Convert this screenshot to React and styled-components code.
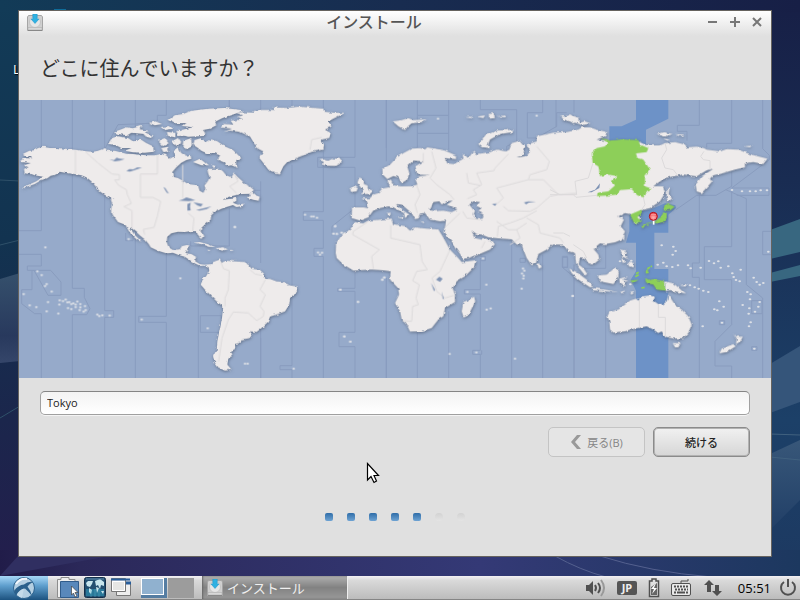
import { useState } from "react";
import styled, { createGlobalStyle, css } from "styled-components";

const GlobalStyle = createGlobalStyle`
  * {
    box-sizing: border-box;
  }

  body {
    margin: 0;
    background: #182c50;
    font-family: "Open Sans", "Noto Sans CJK JP", sans-serif;
  }

  button,
  input {
    font-family: inherit;
    margin: 0;
  }
`;

const Desktop = styled.div`
  position: relative;
  display: flex;
  flex-direction: column;
  min-height: 100vh;
  overflow: hidden;
`;

const WallpaperSvg = styled.svg`
  position: absolute;
  inset: 0;
  width: 100%;
  height: 100%;
`;

const Shortcut = styled.div`
  position: absolute;
  left: 13px;
  top: 9px;
  color: #fff;
  font-size: 13px;
  line-height: 18px;
  text-shadow: 1px 1px 1px #000;

  &::before {
    content: "";
    display: block;
    width: 12px;
    height: 2px;
    margin: 0 0 49px 41px;
    background: #0f6c99;
  }
`;

const Window = styled.main`
  position: relative;
  margin: 10px 28px 19px 18px;
  border: 1px solid #66635f;
  background: #e0e0e0;
`;

const TitleBar = styled.header`
  display: grid;
  grid-template-columns: 24px 1fr 66px;
  align-items: start;
  height: 25px;
  padding: 0 7px;
  background: linear-gradient(#fff, #e0e0e0);

  > svg {
    margin-top: 3px;
  }
`;

const Title = styled.span`
  color: #555;
  font-size: 16px;
  font-weight: 500;
  line-height: 22px;
  text-align: center;
`;

const WindowControls = styled.div`
  display: flex;
  justify-content: flex-end;
  gap: 8px;
  padding-top: 5px;
`;

const ControlButton = styled.button`
  display: flex;
  padding: 0;
  border: 0;
  background: none;
  color: #777;
`;

const Question = styled.h1`
  margin: 0;
  padding: 19px 21px 17px;
  color: #333;
  font-size: 20px;
  font-weight: 400;
  line-height: 28px;
`;

const MapSvg = styled.svg`
  display: block;
  width: 100%;
  height: auto;
  background: #96aaca;
`;

const Controls = styled.form`
  display: flex;
  flex-direction: column;
  gap: 12px;
  padding: 13px 21px 35px;
`;

const CityInput = styled.input`
  width: 100%;
  height: 24px;
  padding: 0 6px 2px;
  border: 1px solid #a0a0a0;
  border-top-color: #858585;
  border-radius: 5px;
  outline: none;
  background: linear-gradient(#f3f3f3, #fff);
  box-shadow: 0 1px 0 #f4f4f4;
  color: #222;
  font-size: 11px;
`;

const ButtonRow = styled.div`
  display: flex;
  justify-content: flex-end;
  gap: 8px;
`;

const Button = styled.button`
  display: flex;
  align-items: center;
  justify-content: center;
  gap: 5px;
  width: 97px;
  height: 30px;
  padding: 0 0 1px;
  border: 1px solid #c4c4c4;
  border-radius: 5px;
  background: #e5e5e5;
  color: #858585;
  font-size: 11px;

  ${({ $primary }) =>
    $primary &&
    css`
      border-color: #8b8b8b;
      background: linear-gradient(#f1f1f1, #d6d6d6);
      box-shadow: inset 0 0 0 1px #b2b2b2;
      color: #222;
      font-weight: 500;
    `}
`;

const Steps = styled.div`
  display: flex;
  justify-content: center;
  gap: 14px;
  margin-top: 44px;
`;

const Step = styled.span`
  width: 8px;
  height: 8px;
  border-radius: ${({ $done }) => ($done ? "2px" : "4px")};
  background: ${({ $done }) =>
    $done
      ? "linear-gradient(#2f6da8, #6ea3d3)"
      : "linear-gradient(#d2d2d2, #e4e4e4)"};
`;

const PointerSvg = styled.svg`
  position: absolute;
  left: 366px;
  top: 462px;
`;

const Taskbar = styled.footer`
  position: relative;
  display: flex;
  align-items: center;
  height: 24px;
  margin-top: auto;
  border-bottom: 1px solid #858585;
  background: linear-gradient(#f3f1f4, #d9d9d9 20%, #bcbcbc);
`;

const StartButton = styled.button`
  display: flex;
  justify-content: center;
  width: 48px;
  height: 24px;
  padding: 0;
  border: 0;
  background: linear-gradient(#a7d8f8, #5f9fce 40%, #1c527f);
`;

const Launchers = styled.div`
  display: flex;
  gap: 4px;
  padding: 0 9px 0 8px;
`;

const BarButton = styled.button`
  display: flex;
  padding: 0;
  border: 0;
  background: none;
  color: #505050;
`;

const Pager = styled.div`
  display: flex;
  gap: 1px;
  margin-right: 8px;
`;

const Workspace = styled.button`
  width: 26px;
  height: 20px;
  padding: 0;
  border: 0;
  background: ${({ $active }) => ($active ? "#557da2" : "#9c9c9c")};

  ${({ $active }) =>
    $active &&
    css`
      &::before {
        content: "";
        display: block;
        width: 21px;
        height: 15px;
        margin-bottom: 4px;
        border: 1px solid #fff;
        background: #90b1cf;
      }
    `}
`;

const TaskButton = styled.button`
  display: flex;
  align-items: center;
  gap: 3px;
  width: 146px;
  height: 23px;
  padding: 0 4px;
  border: 0;
  border-right: 1px solid #eee;
  background: linear-gradient(#b0b0b0, #828282 50%, #999);
  box-shadow: inset 1px 0 2px #666;
  color: #f0f0f0;
  font-size: 13px;
`;

const Tray = styled.div`
  display: flex;
  align-items: center;
  margin-left: auto;
  padding-right: 3px;
  gap: 8px;
`;

const TrayIcons = styled.div`
  display: flex;
  gap: 11px;
  margin-right: 8px;
`;

const Clock = styled.time`
  color: #000;
  font-size: 13px;
  line-height: 20px;
`;

// Coastlines are kept as regional tiles, three units to a map pixel
const regions = [
  {
    x: -3,
    land: [
      "M8 187 20 181 42 181 38 176 22 173 15 167 34 158 48 157 60 150 75 146 95 150 120 150 150 153 180 156 205 160 225 161 240 158 262 150 268 158 290 158 305 162 325 167 345 168 365 170 385 172 410 172 430 168 445 172 455 182 470 174 465 158 480 148 490 165 505 173 517 170 520 182 505 186 490 194 475 208 463 222 465 236 480 240 495 248 510 258 540 262 545 278 556 284 562 272 560 262 570 248 575 238 570 224 568 212 585 212 605 212 615 220 625 232 640 238 648 226 660 238 672 248 680 258 695 265 707 275 700 287 670 288 645 293 630 297 613 305 640 302 655 299 655 308 645 314 660 320 680 316 672 324 655 327 645 321 625 327 610 332 590 342 580 352 578 365 560 380 550 390 548 400 556 415 550 423 542 416 535 400 520 399 500 402 480 401 460 406 448 416 446 432 452 448 465 456 485 454 492 444 510 440 508 455 502 466 520 468 534 476 532 490 545 498 560 501 580 498 575 508 558 502 548 504 530 496 515 486 500 476 480 470 465 464 445 466 420 458 398 448 392 438 380 424 365 412 355 402 340 390 338 394 350 410 362 422 370 431 358 426 345 414 332 398 322 380 300 372 285 352 279 340 282 315 278 303 288 303 262 292 245 280 232 264 220 250 205 238 190 232 170 228 145 225 125 221 112 230 98 233 88 241 70 246 50 258 25 266 4 270 28 262 55 250 75 236 50 232 40 228 20 226 18 212 32 208 18 202 38 195 10 192Z",
      "M452 65 470 52 495 48 520 38 570 32 620 30 675 37 650 48 630 54 612 61 590 72 595 82 575 92 555 96 562 106 555 114 510 116 478 106 490 96 525 88 494 84 505 75 470 76Z",
      "M270 137 282 120 300 115 330 120 345 130 370 125 385 135 405 145 408 161 380 164 345 163 320 158 340 150 310 150 294 142Z",
      "M287 102 310 94 325 88 345 91 370 83 365 94 392 98 380 108 340 104 328 112 300 108Z",
      "M525 140 530 126 548 121 566 132 580 124 598 130 620 145 645 156 670 180 655 186 654 200 660 210 640 202 625 205 618 193 598 185 606 172 588 166 565 165 550 158 540 150Z",
      "M420 128 440 120 452 136 435 145ZM462 130 480 120 490 135 476 144ZM496 128 520 120 522 145 506 154 493 146ZM395 75 412 70 432 78 410 82ZM428 87 455 84 466 92 440 96ZM447 102 472 104 472 118 450 114ZM475 98 550 100 555 110 480 114ZM377 102 402 112 400 120 378 115ZM430 150 450 146 454 160 436 162Z",
      "M525 192 545 182 556 190 570 202 550 202ZM580 200 594 204 588 210ZM690 300 702 283 710 290 725 296 722 308 706 305Z",
      "M526 434 545 432 568 438 592 447 575 446 550 438ZM596 450 615 448 630 454 612 458ZM568 455 578 456 572 459ZM636 455 647 456 640 459Z",
    ],
    borders: [
      "M172 157V228M203 162 240 195 282 228 304 230 304 245 290 246 302 262 325 275 328 290 340 316 318 326 342 338V390M418 172V228H367V298H404L428 310 418 355 408 388 376 394 380 410M494 200V300M510 345 528 360 524 400M650 230 660 250 635 265 655 285",
    ],
    lakes: [
      "M274 184 288 186 296 179 304 182 320 183 306 188 290 190ZM325 219 334 213 346 214 358 208 372 209 350 216 336 221ZM436 267 442 270 448 280 453 287 446 284ZM482 308 494 304 505 298 518 302 532 307 512 309ZM508 318 518 314 516 326 518 337 508 338ZM526 313 540 315 555 318 548 326 538 322ZM534 336 552 332 580 325 566 333 545 338Z",
    ],
    zones: [
      "M3 398H70V6M3 469H70V504H28V517H98L129 552V592H90L48 517M42 517V575H11V617L50 647H70V840M163 6V571H199V598L216 632 206 650H163V840M260 6V638H287V658H260V840M352 6V840M445 52V6M445 52H418V75L300 80 262 150M445 430V655H362V673H445V840M541 500V840M547 653H610V703H547ZM634 340V444H518V430M634 6V30M728 6V40M728 720V840M710 277H728M323 405V428H345V405",
    ],
    dots: [
      [82, 448], [58, 520], [71, 531], [86, 558], [81, 564], [101, 581], [17, 588], [35, 622], [55, 627], [86, 640], [121, 647], [90, 612], [125, 607], [135, 609], [143, 605], [148, 613], [154, 612], [160, 618], [166, 616], [173, 620], [178, 611], [173, 627], [187, 618], [187, 628], [185, 636], [201, 624], [203, 636], [197, 641], [150, 630], [160, 633], [124, 620], [238, 650], [244, 654], [253, 652], [275, 653], [371, 665], [487, 541], [651, 387], [569, 691], [332, 423],
    ],
  },
  {
    x: 543,
    land: [
      "M0 500 22 500 30 502 40 492 60 484 64 495 78 488 105 490 130 492 145 500 155 512 180 516 193 528 195 542 210 543 230 550 250 552 270 562 290 565 292 575 285 588 270 600 268 620 255 640 235 648 210 656 204 672 185 690 170 702 150 700 158 712 152 720 125 725 122 735 105 738 106 752 90 762 98 772 85 782 82 800 95 815 75 818 55 808 45 795 39 775 50 755 52 730 60 690 66 660 70 625 50 610 30 590 15 575 2 560 8 545 18 535 28 518 25 505Z",
      "M58 88 70 78 100 80 92 68 130 64 110 56 130 52 102 42 160 44 185 36 225 36 220 28 260 30 300 26 370 32 372 41 400 44 435 45 400 62 385 70 395 85 375 95 392 105 388 120 365 125 372 140 370 154 335 162 315 170 290 180 262 192 250 205 240 226 225 224 205 215 190 195 178 180 190 160 170 150 160 132 150 115 120 102 90 98 70 102 96 92Z",
      "M358 186 372 184 385 188 400 181 418 182 426 192 405 204 380 203 365 199 372 192Z",
    ],
    borders: [
      "M62 490 70 512 88 518 85 575 75 600 75 625M85 665 100 642 145 645 170 668 190 655 192 640 180 625 196 590 180 575 196 545M85 665 66 720 56 790M150 515 165 528 185 532M330 155 335 125 365 118",
    ],
    lakes: [],
    zones: [
      "M182 250V495M182 690V840M276 6V25M276 200V803H240V815H276V840M370 6V30M370 160V341H310V367H370V451H342V475H370V840M465 6V178H353V208H465V330L396 385V412M465 520V571H413V580H465V703H417V746H465V840M559 6V190M559 540V840M88 6V40M88 330V445",
    ],
    dots: [
      [315, 350], [334, 355], [341, 355], [351, 359], [354, 463], [360, 470], [366, 464], [405, 385], [400, 407], [410, 408], [424, 404], [421, 575], [474, 612], [433, 715], [451, 731], [135, 797], [143, 797], [281, 812], [547, 544], [553, 538], [104, 387],
    ],
  },
  {
    x: 933,
    land: [
      "M65 360 66 328 100 328 115 330 112 312 95 302 120 300 130 290 145 285 156 272 180 267 172 250 182 244 192 262 215 265 245 264 262 260 255 240 272 234 300 231 262 230 256 205 280 190 250 188 232 205 238 225 232 245 215 255 205 238 190 234 172 243 158 230 157 213 180 200 200 178 220 165 245 152 270 150 285 154 292 148 315 152 345 158 378 172 378 183 345 180 352 196 372 198 400 182 398 165 415 180 430 160 440 168 480 162 500 155 528 160 538 155 545 135 570 128 585 145 580 170 560 178 590 174 600 160 590 140 620 130 665 124 670 115 700 105 760 98 760 455 735 465 715 460 700 440 668 438 650 455 625 468 618 495 605 502 590 480 580 455 575 440 560 440 545 424 505 421 475 418 455 410 440 408 425 398 435 420 455 425 470 422 495 438 480 455 440 472 400 484 385 460 365 430 340 402 345 388 348 368 330 370 300 365 290 352 285 345 270 347 265 362 255 363 245 345 215 320 198 318 215 335 238 350 225 360 222 345 190 328 175 325 150 330 130 338 115 358 90 368Z M298 336 310 312 328 310 335 320 350 310 368 308 350 320 382 334 365 342 340 338 315 339Z M418 320 430 310 450 312 440 322 455 330 442 340 460 350 458 362 440 364 428 350 432 338Z",
      "M75 372 100 376 115 368 185 362 190 378 225 384 240 398 255 388 290 392 325 394 338 415 360 455 385 480 395 492 440 486 435 505 405 535 380 550 368 570 375 590 375 612 345 630 340 655 325 665 305 690 275 700 240 701 230 680 215 665 210 640 195 615 207 590 205 572 180 545 182 520 160 517 125 515 70 518 40 500 20 480 17 465 18 435 40 405 60 395Z",
      "M395 640 400 612 418 605 432 596 436 610 416 650 400 656Z",
      "M90 266 82 254 88 238 102 245 102 258 112 262 116 274 130 278 120 288 92 288 102 280ZM60 274 75 262 84 268 80 280 64 282Z",
      "M188 70 215 66 235 60 250 66 290 64 275 72 245 76 235 84 225 96 205 85ZM445 138 465 112 500 98 550 95 548 102 510 108 480 125 474 140 480 150 455 147Z",
      "M405 58 425 56 430 61ZM440 56 465 52 460 60ZM475 48 490 46 495 60 480 62ZM500 55 530 52 525 58ZM622 498 630 495 635 508 626 512ZM172 345 182 344 180 354 174 354ZM200 357 220 355 218 362ZM268 370 285 372 278 375Z",
      "M695 60 720 50 748 60 750 78 710 68Z",
    ],
    borders: [
      "M112 372 70 400 68 410 148 455 125 475 130 512M182 382V420L270 440 276 490 292 515 260 520 248 548 268 560 258 600 265 620 248 625 245 670 218 668M360 455 330 520 306 540 320 580 345 600 372 592M260 262 270 290 255 320 262 345M280 165 280 195M305 160 318 210 300 240 320 260 360 290 372 305M535 168 495 210 492 218 440 225 455 260 430 275 440 290 412 302M410 225 415 255 450 262M620 145 658 190 650 215 600 230 595 245 640 245 685 290 740 285M595 245 500 270 520 300 498 320M685 290 660 295 620 330 600 340 535 338 520 325M398 340 410 360 450 365M390 345 345 388M620 338 580 360 540 375 505 385 502 415M590 360 625 380 630 405 690 420 700 435M540 440 570 420 560 395 590 375M455 450 465 430M500 370 535 395 560 395",
    ],
    lakes: [
      "M318 545 328 536 338 542 330 552ZM303 555 315 575 312 580ZM335 580 342 604 338 602ZM582 313 594 310 618 311 596 314 588 319ZM486 318 500 316 495 324Z",
    ],
    zones: [
      "M262 6V150M262 52H356V6M262 106H356V155M356 52V106M451 6V35H560V130L530 145V160M638 6V44H592V120H620L680 85V44H710M732 6V44M262 700V840M356 640V840M451 475H466V488H451M451 480V575H403V588H451V757H428V769H455V757M451 769V840M545 430V840M638 470V840M732 500V840M570 481H586V493H570ZM697 475H712V508H697ZM697 508 760 560M169 6V150M169 540V840",
    ],
    dots: [
      [16, 384], [11, 407], [21, 408], [36, 404], [31, 575], [84, 612], [43, 715], [61, 731], [157, 546], [163, 538], [359, 768], [439, 763], [555, 782], [412, 582], [469, 560], [470, 635], [482, 631], [575, 572], [579, 511], [583, 518], [576, 526], [581, 533], [580, 541], [459, 481], [728, 594], [620, 53], [324, 62],
    ],
  },
  {
    x: 1593,
    land: [
      "M-40 115 10 104 50 102 85 95 95 88 120 88 140 95 172 102 165 115 140 125 180 130 215 127 260 128 290 142 330 142 345 135 375 132 400 138 410 148 440 146 462 150 470 155 510 160 530 153 565 155 600 168 625 175 652 182 640 198 610 192 585 196 585 208 555 215 520 225 490 232 480 242 485 252 455 285 440 280 437 260 455 235 475 222 490 212 470 217 440 235 400 230 370 235 345 240 310 264 340 265 345 285 330 310 300 330 280 335 258 345 270 358 268 375 252 375 248 355 240 348 225 345 205 355 222 365 212 385 225 400 215 425 195 433 165 438 150 436 140 444 145 455 130 452 145 470 148 485 130 500 115 495 105 480 90 478 86 500 100 510 112 528 105 532 88 512 78 495 75 465 60 450 40 440 8 440 -40 420Z",
      "M172 655 178 642 205 635 225 620 240 608 258 602 265 608 278 595 300 592 315 597 310 608 325 618 340 618 350 610 355 590 365 605 375 620 395 635 415 655 425 680 415 705 400 720 370 722 345 716 335 700 325 705 310 695 290 685 255 692 225 700 190 704 180 695 178 670Z",
      "M368 735 392 735 385 748 375 748ZM345 550 370 556 385 568 405 587 385 582 360 576 345 580ZM390 562 415 556 405 566Z",
      "M550 705 560 716 578 716 572 730 558 738 560 722ZM550 738 557 745 530 762 508 766 515 752Z",
      "M58 512 80 522 110 545 130 565 120 568 85 545 65 525ZM125 570 160 574 205 582 170 580 130 577ZM145 532 170 530 196 508 206 520 205 540 190 558 160 552 145 545ZM208 542 235 535 218 545 235 548 220 553 228 565 210 560ZM212 455 228 457 224 472 236 484 216 476ZM232 495 250 494 252 508 238 506ZM214 480 228 490 218 495ZM215 420 224 412 222 428ZM210 582 225 578 220 586ZM240 585 256 580 245 590Z",
      "M352 268 358 270 356 288 366 302 354 312 350 298ZM320 108 340 102 368 108 345 116ZM375 108 404 110 392 114ZM340 122 360 125 350 128ZM582 145 604 143 600 148ZM35 60 60 50 80 62 60 70ZM85 75 105 70 122 76 95 82ZM30 52 60 58 85 66 70 76 50 68Z",
    ],
    green: [
      "M155 120 180 128 215 124 265 126 270 140 295 150 290 162 258 166 262 180 280 185 300 215 285 235 285 265 305 272 285 282 280 298 262 292 245 273 210 276 200 290 180 292 140 294 145 284 175 280 195 262 185 250 202 234 175 230 150 234 145 205 128 195 125 165 140 150 165 145 172 134Z",
      "M240 350 275 335 275 344 262 358 272 368 268 376 252 374Z",
      "M345 318 360 320 374 326 362 336 350 337 340 333ZM342 340 350 345 350 360 342 370 325 376 308 374 288 378 278 392 274 384 285 376 310 372 332 358ZM292 380 300 379 296 385Z",
      "M285 540 300 546 310 543 345 550 345 578 320 575 310 560 290 555ZM285 518 296 512 290 528ZM240 548 266 545 250 555Z",
    ],
    borders: [
      "M345 135 350 155 335 180 345 210 370 215 385 235M462 160 452 175 460 185 480 188 480 215M128 198 115 240 75 250 80 290 30 290 0 275M0 290 70 290 78 298 140 292M280 298 285 320 275 335M60 415 40 405 10 405M268 606V688M325 618V658H346V718M70 440 100 460 110 480",
    ],
    lakes: ["M113 283 135 275 150 256 148 270 125 283Z"],
    zones: [
      "M18 6V88M72 500V840M167 438V511H90M167 590V840M448 6V82H382V100H411V128M448 290V495H427V538H448V840M545 6V136H470V148M545 220V265L498 292H440L378 335M545 275V446H463V545H545V680L495 730V804H545V840M638 6V152L658 172V185L545 270H657V292H560M527 275 589 302V560L638 600V840M605 608H636V647H605ZM663 400H638V470H663M508 668H524V680H508ZM605 746H621V757H605ZM38 478H53V508H38Z",
    ],
    dots: [
      [335, 442], [370, 446], [377, 459], [368, 470], [323, 500], [340, 494], [350, 505], [367, 507], [384, 502], [414, 502], [422, 511], [452, 509], [477, 489], [492, 496], [505, 490], [512, 509], [535, 505], [547, 526], [551, 537], [558, 546], [569, 550], [572, 515], [611, 539], [620, 552], [629, 560], [640, 555], [655, 461], [592, 582], [602, 589], [600, 604], [578, 621], [598, 631], [596, 647], [629, 612], [625, 626], [615, 641], [602, 673], [597, 685], [493, 634], [502, 637], [508, 610], [521, 626], [420, 562], [434, 568], [446, 572], [460, 578], [475, 582], [546, 276], [576, 280], [600, 280], [617, 280], [632, 277], [651, 277], [516, 674], [613, 752], [458, 685], [68, 594], [210, 490], [244, 488], [241, 559],
    ],
  },
];

const WorldMap = () => (
  <MapSvg viewBox="0 0 2256 834" role="img" aria-label="Asia/Tokyo">
    <defs>
      <filter id="coast" filterUnits="userSpaceOnUse" x="0" y="0" width="2256" height="834" colorInterpolationFilters="sRGB">
        <feTurbulence type="fractalNoise" baseFrequency="0.07" numOctaves="2" seed="4" result="noise" />
        <feDisplacementMap in="SourceGraphic" in2="noise" scale="9" xChannelSelector="R" yChannelSelector="G" result="rough" />
        <feDropShadow in="rough" dx="1" dy="3" stdDeviation="4" floodColor="#394558" floodOpacity="0.6" />
      </filter>
      <radialGradient id="pin" cy="0.7">
        <stop offset="0" stopColor="#ffb0b0" />
        <stop offset="1" stopColor="#f0595d" />
      </radialGradient>
    </defs>
    <g transform="translate(1593 -6)" fill="#6d92c7">
      <path d="M258 0H355V62L288 95V160L178 130V85H215L258 65Z" />
      <path d="M345 316 376 322 378 330 355 350V404H313V513H355V840H258V578L242 545 258 520V434H228L238 400V345L300 335Z" />
    </g>
    {regions.map(({ x, zones }) => (
      <g key={x} transform={`translate(${x} -6)`} fill="none" stroke="#899cbe" strokeWidth="3">
        {zones.map((d) => <path key={d} d={d} />)}
      </g>
    ))}
    <g filter="url(#coast)">
      {regions.map(({ x, land, green = [] }) => (
        <g key={x} transform={`translate(${x} -6)`} fill="#eeebeb" fillRule="evenodd">
          {land.map((d) => <path key={d} d={d} />)}
          {green.map((d) => <path key={d} d={d} fill="#8dcf59" />)}
        </g>
      ))}
    </g>
    {regions.map(({ x, borders, lakes, dots }) => (
      <g key={x} transform={`translate(${x} -6)`}>
        {borders.map((d) => <path key={d} d={d} fill="none" stroke="#dcdadb" strokeWidth="3" />)}
        {lakes.map((d) => <path key={d} d={d} fill="#7f93b4" />)}
        {dots.map(([cx, cy]) => <ellipse key={`${cx}-${cy}`} cx={cx} cy={cy} rx="4" ry="3" fill="#dde0e6" />)}
      </g>
    ))}
    <g transform="translate(1593 -6)">
      <path d="M292 512 300 508M288 523H296M258 527 266 523M256 536 266 530M274 570 284 568M302 506 306 504" stroke="#8dcf59" strokeWidth="5" />
      <path d="M311 364V380" stroke="#fff" strokeWidth="5" />
      <circle cx="310" cy="355" r="12" fill="url(#pin)" stroke="#b30e18" strokeWidth="3" />
      <path d="M303 350H318M304 357H317" stroke="#ffb3b3" strokeWidth="2" />
    </g>
  </MapSvg>
);

const Wallpaper = () => (
  <WallpaperSvg viewBox="0 0 800 600" preserveAspectRatio="none" aria-hidden="true">
    <defs>
      <linearGradient id="left" x2="0" y2="1">
        <stop offset="0" stopColor="#123b57" />
        <stop offset="0.4" stopColor="#123350" />
        <stop offset="0.7" stopColor="#1b264c" />
        <stop offset="1" stopColor="#251c4d" />
      </linearGradient>
      <linearGradient id="right" x2="0" y2="1">
        <stop offset="0" stopColor="#171f46" />
        <stop offset="0.3" stopColor="#192c52" />
        <stop offset="0.7" stopColor="#1c4068" />
        <stop offset="1" stopColor="#1d3860" />
      </linearGradient>
      <linearGradient id="top">
        <stop offset="0" stopColor="#123b57" />
        <stop offset="0.5" stopColor="#182c50" />
        <stop offset="1" stopColor="#171f46" />
      </linearGradient>
      <linearGradient id="bottom">
        <stop offset="0" stopColor="#211c49" />
        <stop offset="0.1" stopColor="#2b2859" />
        <stop offset="0.6" stopColor="#343976" />
        <stop offset="1" stopColor="#1c385f" />
      </linearGradient>
      <linearGradient id="beam" x2="0" y2="1">
        <stop offset="0" stopColor="#35506c" />
        <stop offset="0.7" stopColor="#28395d" />
        <stop offset="1" stopColor="#35466a" />
      </linearGradient>
      <linearGradient id="glow" x2="0" y2="1">
        <stop offset="0" stopColor="#385779" />
        <stop offset="1" stopColor="#213f67" />
      </linearGradient>
    </defs>
    <path d="M0 0H400V600H0Z" fill="url(#left)" />
    <path d="M400 0H800V600H400Z" fill="url(#right)" />
    <path d="M0 0H800V12H0Z" fill="url(#top)" />
    <path d="M0 550H800V600H0Z" fill="url(#bottom)" />
    <path d="M0 279 20 273V361L0 363Z" fill="url(#beam)" />
    <path d="M0 180 20 181M0 245 20 240M0 418 20 406" stroke="#2f5069" fill="none" />
    <path d="M770 230 800 219V252L770 259ZM770 273 800 265V276L770 282Z" fill="#386780" />
    <path d="M770 364 800 346V402L770 413Z" fill="#35557a" />
    <path d="M770 454 800 440V500L770 530Z" fill="url(#glow)" />
    <path d="M770 434 800 435M770 457 800 460" stroke="#41617f" />
    <path d="M555 556Q580 570 606 577M600 556Q650 572 712 577" stroke="#54608e" fill="none" />
    <path d="M0 576 55 566 110 556H18Z" fill="#302f61" />
  </WallpaperSvg>
);

const InstallerIcon = ({ size }) => (
  <svg width={size} height={size} viewBox="0 0 18 18" aria-hidden="true">
    <path d="M2.5 1.5H15.5L16.5 3V16.5H1.5V3Z" fill="#d0d0d0" stroke="#a5a5a5" />
    <circle cx="9" cy="8" r="5.5" fill="#e6e6e6" stroke="#c4c4c4" />
    <path d="M2 13.5H16V16H2Z" fill="#d8d8d8" stroke="#aaa" strokeWidth="0.5" />
    <path d="M6.8 0H11.2V5H13L9 9.5 5 5H6.8Z" fill="#2fb1e2" stroke="#1c93c6" strokeWidth="0.5" />
    <path d="M2 16.5H16" stroke="#888" />
  </svg>
);

const ControlIcon = ({ d }) => (
  <svg width="14" height="14" viewBox="0 0 14 14" aria-hidden="true">
    <path d={d} fill="none" stroke="currentColor" strokeWidth="2" />
  </svg>
);

const StartIcon = () => (
  <svg width="24" height="23" viewBox="0 0 24 23" aria-hidden="true">
    <circle cx="12" cy="12" r="10.5" fill="#b4cfe2" stroke="#2c628e" />
    <path d="M4 8Q8 2 15 3" fill="none" stroke="#f3f8fc" strokeWidth="2" />
    <path d="M2 15Q6 9 12 8.5Q16 5 21 6Q17 8 15.500 10.500Q19 15 20 20Q16 15 13 12.500Q7 13 4 20Z" fill="#2a608c" />
    <path d="M5 19Q7 14 12 12.500L10 22Q7 21 5 19Z" fill="#c5dbea" />
  </svg>
);

const FilesIcon = () => (
  <svg width="24" height="23" viewBox="0 0 24 23" aria-hidden="true">
    <path d="M1.5 21.5V3.5H5V1.5H13V3.5H19V21.5Z" fill="#eee" stroke="#8d8d8d" />
    <path d="M4.5 5.5H22.5V21.5H4.5Z" fill="#5988bb" stroke="#315c8b" />
    <path d="M15.5 10V19L17.5 17L19 21L21 20L19 16.5H22Z" fill="#fff" stroke="#444" strokeWidth="0.7" />
  </svg>
);

const WebIcon = () => (
  <svg width="22" height="23" viewBox="0 0 22 23" aria-hidden="true">
    <rect x="0.5" y="1.5" width="21" height="20" rx="2" fill="#234e70" stroke="#15304a" />
    <path d="M2 13H20V20H2Z" fill="#2a7899" />
    <path d="M2 7 4 5 9 5 8 8 6 11 3 10ZM5 12 8 14 7 18 5 16ZM11 5 16 3 20 6 20 10 17 9 16 13 14 9 12 10ZM12 11 15 12 13 17ZM17 15 20 15 19 18Z" fill="#c8e5ed" />
    <path d="M2 3H20" stroke="#6791b2" />
    <path d="M7 14V21M11 13V21M15 14V21" stroke="#5bacc4" strokeWidth="0.5" />
  </svg>
);

const WindowsIcon = () => (
  <svg width="22" height="23" viewBox="0 0 22 23" aria-hidden="true">
    <path d="M6.5 6.5H20.5V19.5H6.5Z" fill="#eee" stroke="#777" />
    <path d="M6 7H21" stroke="#285d9a" strokeWidth="3" />
    <path d="M1.5 2.5H15.5V15.5H1.5Z" fill="#e6e6e4" stroke="#777" />
    <path d="M1 3.5H20" stroke="#285d9a" strokeWidth="2" />
    <path d="M2.5 5.5H14.5V14.5H2.5Z" fill="none" stroke="#fff" />
  </svg>
);

const SpeakerIcon = () => (
  <svg width="20" height="20" viewBox="0 0 20 20" fill="none" stroke="currentColor" aria-hidden="true">
    <path d="M0 7H3L7 3V17L3 13H0Z" fill="currentColor" stroke="none" />
    <path d="M9 7Q11 10 9 13" strokeWidth="2" />
    <path d="M12 5Q16 10 12 15" strokeWidth="2" />
    <path d="M15 2Q21 10 15 18" stroke="#999" strokeWidth="2" />
  </svg>
);

const KeymapIcon = () => (
  <svg width="20" height="20" viewBox="0 0 20 20" aria-hidden="true">
    <rect y="3" width="20" height="14" rx="2" fill="#555" />
    <text x="10" y="14" fill="#eee" fontFamily="Open Sans, sans-serif" fontSize="11" fontWeight="700" textAnchor="middle">JP</text>
  </svg>
);

const BatteryIcon = () => (
  <svg width="12" height="20" viewBox="0 0 12 20" aria-hidden="true">
    <path d="M4 1H8V3H10.5V18.5H1.5V3H4Z" fill="#e1e1e1" stroke="#505050" strokeWidth="1.5" />
    <path d="M3 17V9L9 5V17Z" fill="#666" />
    <path d="M8 5 3 11H6L4 16L9 10H6Z" fill="#fff" />
  </svg>
);

const KeyboardIcon = () => (
  <svg width="22" height="20" viewBox="0 0 22 20" fill="none" stroke="currentColor" aria-hidden="true">
    <path d="M10 5V3H17V1" />
    <rect x="0.5" y="5.500" width="19" height="12" rx="1.5" fill="#e9e9e9" />
    <path d="M3 8.5H17M4 11.5H17" strokeWidth="2" strokeDasharray="2 1" />
    <path d="M3 14.5H5M6 14.5H14M15 14.5H17" strokeWidth="2" />
  </svg>
);

const NetworkIcon = () => (
  <svg width="18" height="20" viewBox="0 0 18 20" fill="currentColor" aria-hidden="true">
    <path d="M5 2 10 7H7V14H3V7H0ZM11 7H15V13H18L13 18L8 13H11Z" />
  </svg>
);

const PowerIcon = () => (
  <svg width="18" height="20" viewBox="0 0 18 20" fill="none" stroke="currentColor" strokeWidth="2" aria-hidden="true">
    <path d="M5 4A7 7 0 1 0 13 4M9 1V9" />
  </svg>
);

const controls = [
  { label: "最小化", d: "M2 6H11" },
  { label: "最大化", d: "M2 6H12M7 1V11" },
  { label: "閉じる", d: "M3 2 11 10M11 2 3 10" },
];

const launchers = [
  { label: "ファイル", Icon: FilesIcon },
  { label: "ブラウザ", Icon: WebIcon },
  { label: "デスクトップ", Icon: WindowsIcon },
];

const trayItems = [
  { label: "音量", Icon: SpeakerIcon },
  { label: "入力", Icon: KeymapIcon },
  { label: "電源", Icon: BatteryIcon },
  { label: "キーボード", Icon: KeyboardIcon },
  { label: "ネットワーク", Icon: NetworkIcon },
];

const steps = [true, true, true, true, true, false, false];

const Installer = () => {
  const [city, setCity] = useState("Tokyo");

  return (
    <Window>
      <TitleBar>
        <InstallerIcon size={18} />
        <Title>インストール</Title>
        <WindowControls>
          {controls.map(({ label, d }) => (
            <ControlButton key={label} type="button" aria-label={label}>
              <ControlIcon d={d} />
            </ControlButton>
          ))}
        </WindowControls>
      </TitleBar>
      <Question>
        <label htmlFor="city">どこに住んでいますか？</label>
      </Question>
      <WorldMap />
      <Controls onSubmit={(event) => event.preventDefault()}>
        <CityInput
          id="city"
          type="text"
          value={city}
          onChange={(event) => setCity(event.target.value)}
        />
        <ButtonRow>
          <Button type="button" disabled>
            <svg width="12" height="16" viewBox="0 0 12 16" aria-hidden="true">
              <path d="M7 1H11L5 8 11 15H7L1 8Z" fill="#999" />
            </svg>
            戻る(B)
          </Button>
          <Button type="submit" $primary>
            続ける
          </Button>
        </ButtonRow>
        <Steps>
          {steps.map((done, index) => (
            <Step key={index} $done={done} />
          ))}
        </Steps>
      </Controls>
    </Window>
  );
};

const Panel = () => (
  <Taskbar>
    <StartButton type="button" aria-label="メニュー">
      <StartIcon />
    </StartButton>
    <Launchers>
      {launchers.map(({ label, Icon }) => (
        <BarButton key={label} type="button" aria-label={label}>
          <Icon />
        </BarButton>
      ))}
    </Launchers>
    <Pager>
      <Workspace type="button" aria-label="デスクトップ 1" $active />
      <Workspace type="button" aria-label="デスクトップ 2" />
    </Pager>
    <TaskButton type="button">
      <InstallerIcon size={18} />
      インストール
    </TaskButton>
    <Tray>
      <TrayIcons>
        {trayItems.map(({ label, Icon }) => (
          <BarButton key={label} type="button" aria-label={label}>
            <Icon />
          </BarButton>
        ))}
      </TrayIcons>
      <Clock>05:51</Clock>
      <BarButton type="button" aria-label="終了">
        <PowerIcon />
      </BarButton>
    </Tray>
  </Taskbar>
);

const App = () => (
  <Desktop>
    <GlobalStyle />
    <Wallpaper />
    <Shortcut>L</Shortcut>
    <Installer />
    <Panel />
    <PointerSvg width="14" height="23" viewBox="0 0 14 23" aria-hidden="true">
      <path d="M1.5 1.5V18L5 14.5L8 20.5L10.5 19L8 13.5H12.5Z" fill="#fff" stroke="#000" strokeWidth="1.2" />
    </PointerSvg>
  </Desktop>
);

export default App;
